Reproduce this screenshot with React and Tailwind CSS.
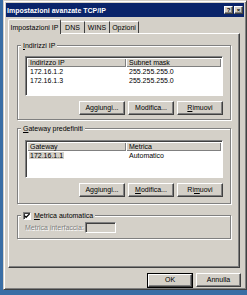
import React from 'react';

const raised =
  'bg-[#d4d0c8] border border-t-white border-l-white border-r-[#404040] border-b-[#404040] shadow-[inset_-1px_-1px_0_#808080]';

const Btn = ({ children, w = 'w-[46px]', def }) => {
  if (def) {
    return (
      <div className={`border border-black ${w} h-[15px] flex`}>
        <div className={`${raised} flex-1 flex items-center justify-center`}>{children}</div>
      </div>
    );
  }
  return (
    <div className={`${raised} ${w} h-[14px] flex items-center justify-center`}>{children}</div>
  );
};

const U = ({ children }) => <span className="underline underline-offset-1">{children}</span>;

const Group = ({ label, h, children }) => (
  <div
    className={`relative border border-[#808080] shadow-[inset_1px_1px_0_#fff,1px_1px_0_#fff] ${h}`}
  >
    <div className="absolute left-[3px] -top-[5px] bg-[#d4d0c8] px-[2px] leading-[9px]">{label}</div>
    {children}
  </div>
);

const List = ({ h, rows, selected }) => (
  <div
    className={`bg-white border border-t-[#808080] border-l-[#808080] border-r-white border-b-white shadow-[inset_1px_1px_0_#404040] p-[1px] ${h}`}
  >
    <div className="flex h-[9px]">
      <div className="w-[99px] bg-[#d4d0c8] shadow-[inset_1px_1px_0_#fff,inset_-1px_-1px_0_#808080] pl-[3px] leading-[9px]">
        {rows.head[0]}
      </div>
      <div className="flex-1 bg-[#d4d0c8] shadow-[inset_1px_1px_0_#fff,inset_-1px_-1px_0_#808080] pl-[3px] leading-[9px]">
        {rows.head[1]}
      </div>
    </div>
    {rows.data.map((r, i) => (
      <div key={i} className="flex h-[9px] leading-[9px]">
        <div className="w-[99px] pl-[2px]">
          <span className={selected === i ? 'bg-[#d4d0c8] px-[1px]' : 'px-[1px]'}>{r[0]}</span>
        </div>
        <div className="flex-1 pl-[3px]">{r[1]}</div>
      </div>
    ))}
  </div>
);

export default function App() {
  return (
    <div className="w-[247px] h-[295px] bg-[#3a6ea5] pl-[3px] overflow-hidden font-['Liberation_Sans',Arial,sans-serif] text-[7px] text-black">
      <div className="w-[244px] h-[290px] bg-[#d4d0c8] border border-t-[#d4d0c8] border-l-[#d4d0c8] border-r-[#404040] border-b-[#404040] shadow-[inset_1px_1px_0_#fff,inset_-1px_-1px_0_#808080] p-[2px]">
        {/* barra del titolo */}
        <div className="h-[14px] bg-[#0a246a] flex items-center pl-[1px] pr-[1px]">
          <span className="text-white font-bold flex-1 leading-none">Impostazioni avanzate TCP/IP</span>
          <div className={`${raised} w-[9px] h-[8px] flex items-center justify-center font-bold text-[6px] leading-none`}>?</div>
          <div className={`${raised} w-[9px] h-[8px] ml-[1px] flex items-center justify-center font-bold text-[6px] leading-none`}>×</div>
        </div>

        {/* schede */}
        <div className="ml-[2px] mt-[2px] flex items-end h-[14px]">
          <div className="relative z-10 w-[53px] h-[15px] -mb-px bg-[#d4d0c8] border-l border-t border-white border-r border-r-[#404040] rounded-t-[2px] flex items-center justify-center leading-none">
            Impostazioni IP
          </div>
          <div className="w-[24px] h-[12px] border-t border-white border-r border-r-[#404040] flex items-center justify-center leading-none">
            DNS
          </div>
          <div className="w-[25px] h-[12px] border-t border-white border-r border-r-[#404040] flex items-center justify-center leading-none">
            WINS
          </div>
          <div className="w-[29px] h-[12px] border-t border-white border-r border-r-[#404040] flex items-center justify-center leading-none">
            Opzioni
          </div>
        </div>

        {/* pannello */}
        <div className="ml-[2px] w-[232px] h-[235px] border border-t-white border-l-white border-r-[#404040] border-b-[#404040] shadow-[inset_-1px_-1px_0_#808080] pt-[11px] px-[8px]">
          <Group label={<><U>I</U>ndirizzi IP</>} h="h-[75px]">
            <div className="px-[7px] pt-[10px]">
              <List
                h="h-[40px]"
                rows={{ head: ['Indirizzo IP', 'Subnet mask'], data: [['172.16.1.2', '255.255.255.0'], ['172.16.1.3', '255.255.255.0']] }}
              />
              <div className="flex justify-end gap-[3px] mt-[5px]">
                <Btn>Aggiungi...</Btn>
                <Btn>Modifica...</Btn>
                <Btn><U>R</U>imuovi</Btn>
              </div>
            </div>
          </Group>

          <div className="mt-[8px]">
            <Group label={<><U>G</U>ateway predefiniti</>} h="h-[76px]">
              <div className="px-[7px] pt-[11px]">
                <List
                  h="h-[38px]"
                  selected={0}
                  rows={{ head: ['Gateway', 'Metrica'], data: [['172.16.1.1', 'Automatico']] }}
                />
                <div className="flex justify-end gap-[3px] mt-[5px]">
                  <Btn>A<U>g</U>giungi...</Btn>
                  <Btn><U>M</U>odifica...</Btn>
                  <Btn>Ri<U>m</U>uovi</Btn>
                </div>
              </div>
            </Group>
          </div>

          <div className="mt-[11px]">
            <Group
              h="h-[24px]"
              label={
                <div className="flex items-center gap-[3px]">
                  <div className="w-[8px] h-[8px] bg-white border border-t-[#808080] border-l-[#808080] border-r-white border-b-white shadow-[inset_1px_1px_0_#404040] flex items-center justify-center">
                    <svg width="6" height="6" viewBox="0 0 7 7">
                      <path d="M0.5 3 L2.5 5 L6.5 1" stroke="#000" strokeWidth="1.4" fill="none" />
                    </svg>
                  </div>
                  <span><U>M</U>etrica automatica</span>
                </div>
              }
            >
              <div className="flex items-center pl-[7px] pt-[6px]">
                <span className="w-[60px] text-[#808080] [text-shadow:1px_1px_0_#fff] leading-none">Metrica interfaccia:</span>
                <div className="w-[31px] h-[11px] bg-[#d4d0c8] border border-t-[#808080] border-l-[#808080] border-r-white border-b-white shadow-[inset_1px_1px_0_#404040]" />
              </div>
            </Group>
          </div>
        </div>

        {/* pulsanti */}
        <div className="flex justify-end gap-[3px] mt-[5px] pr-[3px]">
          <Btn def>OK</Btn>
          <Btn w="w-[45px]">Annulla</Btn>
        </div>
      </div>
    </div>
  );
}
